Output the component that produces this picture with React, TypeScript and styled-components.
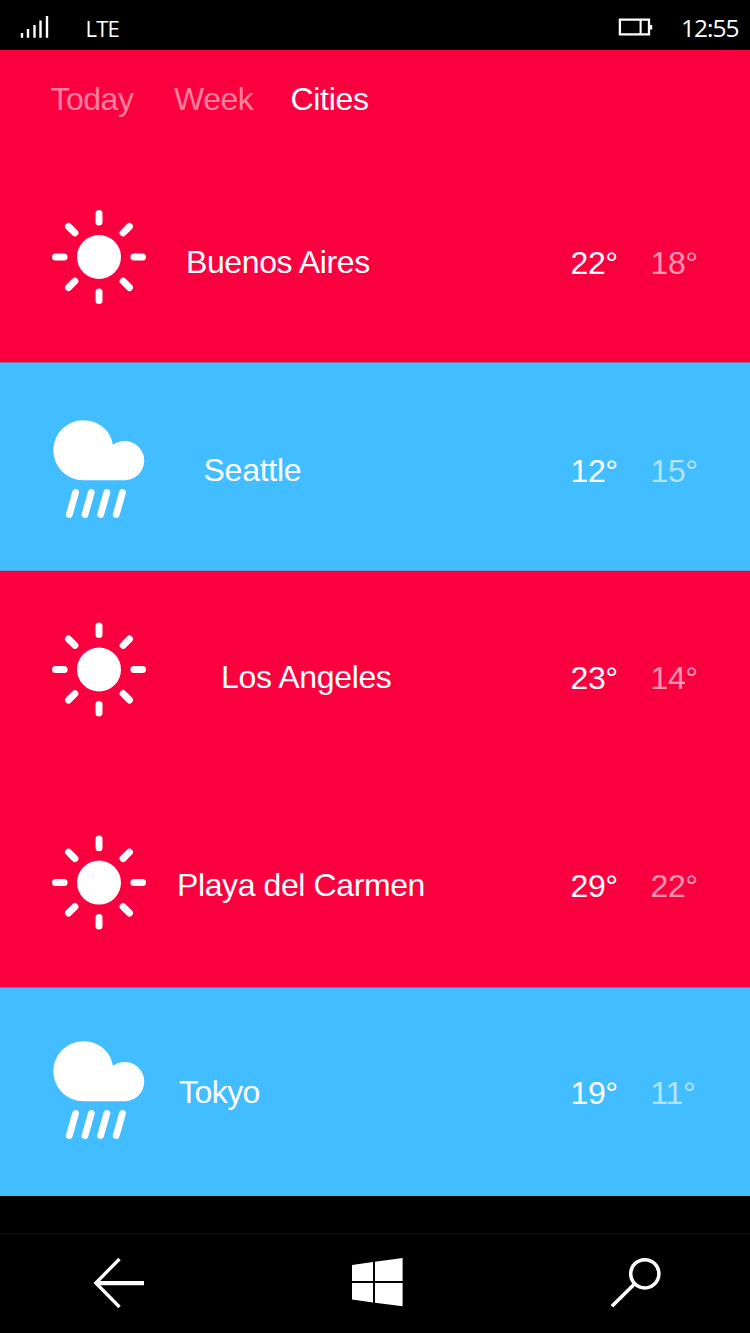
import React from 'react';
import styled, { createGlobalStyle } from 'styled-components';

const GlobalStyle = createGlobalStyle`
  * { box-sizing: border-box; }
  body { margin: 0; background: #000; }
`;

const Screen = styled.div`
  width: 750px;
  height: 1333px;
  overflow: hidden;
  display: flex;
  flex-direction: column;
  background: #000;
  color: #fff;
  font-family: 'Liberation Sans', Arial, sans-serif;
`;

const StatusBar = styled.header`
  display: flex;
  height: 50px;
  flex: none;
  padding-left: 20px;
  font-family: 'Open Sans', 'Noto Sans', sans-serif;
  white-space: nowrap;
`;

const SignalIcon = styled.svg`
  width: 30px;
  height: 24px;
  margin-top: 15px;
`;

const Carrier = styled.span`
  width: 568px;
  padding: 13px 0 0 35.6px;
  font-size: 22px;
  line-height: 30px;
  letter-spacing: -0.9px;
`;

const BatteryIcon = styled.svg`
  width: 36px;
  height: 20px;
  margin-top: 17px;
`;

const Clock = styled.time`
  margin-left: 27px;
  padding-top: 12px;
  font-size: 24.5px;
  line-height: 32px;
  letter-spacing: -1px;
`;

const Tabs = styled.nav`
  display: flex;
  flex: none;
  height: 105px;
  padding: 31px 0 0 50.5px;
  background: #fb003f;
  font-size: 32px;
  line-height: 37px;
`;

const Tab = styled.a<{ $active?: boolean; $width: number; $spacing: number }>`
  width: ${(p) => p.$width}px;
  letter-spacing: ${(p) => p.$spacing}px;
  color: ${(p) => (p.$active ? '#fff' : 'rgba(255, 255, 255, 0.5)')};
`;

const CityRow = styled.section<{ $rain: boolean; $height: number; $edge?: string }>`
  display: flex;
  flex: none;
  align-items: flex-start;
  height: ${(p) => p.$height}px;
  padding-left: 51px;
  background: ${(p) => (p.$rain ? '#42bdff' : '#fb003f')};
  border-bottom: ${(p) => (p.$edge ? `1px solid ${p.$edge}` : 'none')};
  font-size: 32px;
  line-height: 37px;
  white-space: nowrap;
`;

const WeatherIcon = styled.svg<{ $top: number }>`
  flex: none;
  width: 96px;
  height: 100px;
  margin-top: ${(p) => p.$top}px;
`;

const CityName = styled.h2<{ $indent: number; $top: number; $spacing: number }>`
  flex: 1;
  margin: ${(p) => p.$top}px 0 0;
  padding-left: ${(p) => p.$indent}px;
  font: inherit;
  letter-spacing: ${(p) => p.$spacing}px;
`;

const Temperature = styled.span<{ $top: number; $dim?: boolean }>`
  flex: none;
  width: ${(p) => (p.$dim ? 99.5 : 80)}px;
  margin-top: ${(p) => p.$top}px;
  letter-spacing: -0.4px;
  color: ${(p) => (p.$dim ? 'rgba(255, 255, 255, 0.6)' : '#fff')};
`;

const NavBar = styled.footer`
  display: flex;
  flex: none;
  height: 100px;
  margin-top: 37px;
  padding-left: 93px;
  border-top: 1px solid #141414;
`;

const NavIcon = styled.svg<{ $gap?: number }>`
  width: 52px;
  height: 52px;
  margin: 23px 0 0 ${(p) => p.$gap ?? 0}px;
`;

function Sun({ top }: { top: number }) {
  const whole = Math.floor(top);
  return (
    <WeatherIcon $top={whole} viewBox={`0 ${whole - top} 96 100`}>
      <circle cx="48" cy="48" r="22" fill="#fff" />
      <g stroke="#fff" strokeWidth="7" strokeLinecap="round">
        {[0, 90, 180, 270].map((a) => (
          <path key={a} d="M48 4.5V13.1" transform={`rotate(${a} 48 48)`} />
        ))}
        {[45, 135, 225, 315].map((a) => (
          <path key={a} d="M48 4.9V13.9" transform={`rotate(${a} 48 48)`} />
        ))}
      </g>
    </WeatherIcon>
  );
}

function RainCloud({ top }: { top: number }) {
  return (
    <WeatherIcon $top={top} viewBox="0 0 96 100">
      <path
        d="M32.3 .3C48 .3 60.3 11.2 61.8 24.8A19.7 19.7 0 1 1 74.3 60.3H32.3A30 30 0 0 1 2.3 30.3A30 30 0 0 1 32.3 .3Z"
        fill="#fff"
      />
      <g stroke="#fff" strokeWidth="6.8" strokeLinecap="round">
        <path d="M24.6 72.4L18.3 94.6" />
        <path d="M40.3 72.4L34 94.6" />
        <path d="M55.9 72.4L49.6 94.6" />
        <path d="M71.5 72.4L65.2 94.6" />
      </g>
    </WeatherIcon>
  );
}

type City = {
  name: string;
  high: number;
  low: number;
  rain: boolean;
  height: number;
  iconTop: number;
  nameTop: number;
  indent: number;
  spacing: number;
  edge?: string;
};

const cities: City[] = [
  { name: 'Buenos Aires', high: 22, low: 18, rain: false, height: 208, iconTop: 54, nameTop: 89, indent: 39, spacing: -0.4, edge: '#8e6a9f' },
  { name: 'Seattle', high: 12, low: 15, rain: true, height: 208, iconTop: 57, nameTop: 89, indent: 56.5, spacing: -0.25, edge: '#6892cc' },
  { name: 'Los Angeles', high: 23, low: 14, rain: false, height: 208, iconTop: 50.5, nameTop: 88, indent: 74, spacing: -0.35 },
  { name: 'Playa del Carmen', high: 29, low: 22, rain: false, height: 209, iconTop: 55.6, nameTop: 88, indent: 30, spacing: -0.4, edge: '#8e6a9f' },
  { name: 'Tokyo', high: 19, low: 11, rain: true, height: 208, iconTop: 53, nameTop: 86, indent: 32, spacing: -0.55 },
];

export default function App() {
  return (
    <Screen>
      <GlobalStyle />
      <StatusBar>
        <SignalIcon viewBox="0 0 30 24">
          <path d="M2 18V22.7M8 14V22.7M14.5 10V22.7M20.5 5.5V22.7M27 1V22.7" stroke="#fff" strokeWidth="2.4" />
        </SignalIcon>
        <Carrier>LTE</Carrier>
        <BatteryIcon viewBox="0 0 36 20">
          <path d="M1.9 2.7H31V17.3H1.9Z" fill="none" stroke="#fff" strokeWidth="2.3" />
          <path d="M22.6 3V17" stroke="#fff" strokeWidth="2.1" />
          <path d="M32 8H34.2V12.5H32Z" fill="#fff" />
        </BatteryIcon>
        <Clock>12:55</Clock>
      </StatusBar>
      <Tabs>
        <Tab $width={123.5} $spacing={-0.5}>Today</Tab>
        <Tab $width={116.5} $spacing={-0.5}>Week</Tab>
        <Tab $active $width={100} $spacing={-0.3}>Cities</Tab>
      </Tabs>
      {cities.map((c) => (
        <CityRow key={c.name} $rain={c.rain} $height={c.height} $edge={c.edge}>
          {c.rain ? <RainCloud top={c.iconTop} /> : <Sun top={c.iconTop} />}
          <CityName $indent={c.indent} $top={c.nameTop} $spacing={c.spacing}>{c.name}</CityName>
          <Temperature $top={c.nameTop + 1}>{c.high}°</Temperature>
          <Temperature $top={c.nameTop + 1} $dim>{c.low}°</Temperature>
        </CityRow>
      ))}
      <NavBar>
        <NavIcon viewBox="0 0 52 52">
          <path d="M26.5 2L2.8 26L26.5 50" fill="none" stroke="#fff" strokeWidth="3.3" />
          <path d="M3.5 26.2H51" stroke="#fff" strokeWidth="4.2" />
        </NavIcon>
        <NavIcon $gap={206} viewBox="0 0 52 52">
          <path
            d="M1 8L22 5V24H1ZM24 4.8L51.6 1V24H24ZM1 26H22V45.5L1 42.5ZM24 26H51.6V49.3L24 45.8Z"
            fill="#fff"
          />
        </NavIcon>
        <NavIcon $gap={207} viewBox="0 0 52 52">
          <circle cx="34.8" cy="16.8" r="14.1" fill="none" stroke="#fff" strokeWidth="3.5" />
          <path d="M24.7 26.7L1.9 49.3" stroke="#fff" strokeWidth="3.6" />
        </NavIcon>
      </NavBar>
    </Screen>
  );
}
